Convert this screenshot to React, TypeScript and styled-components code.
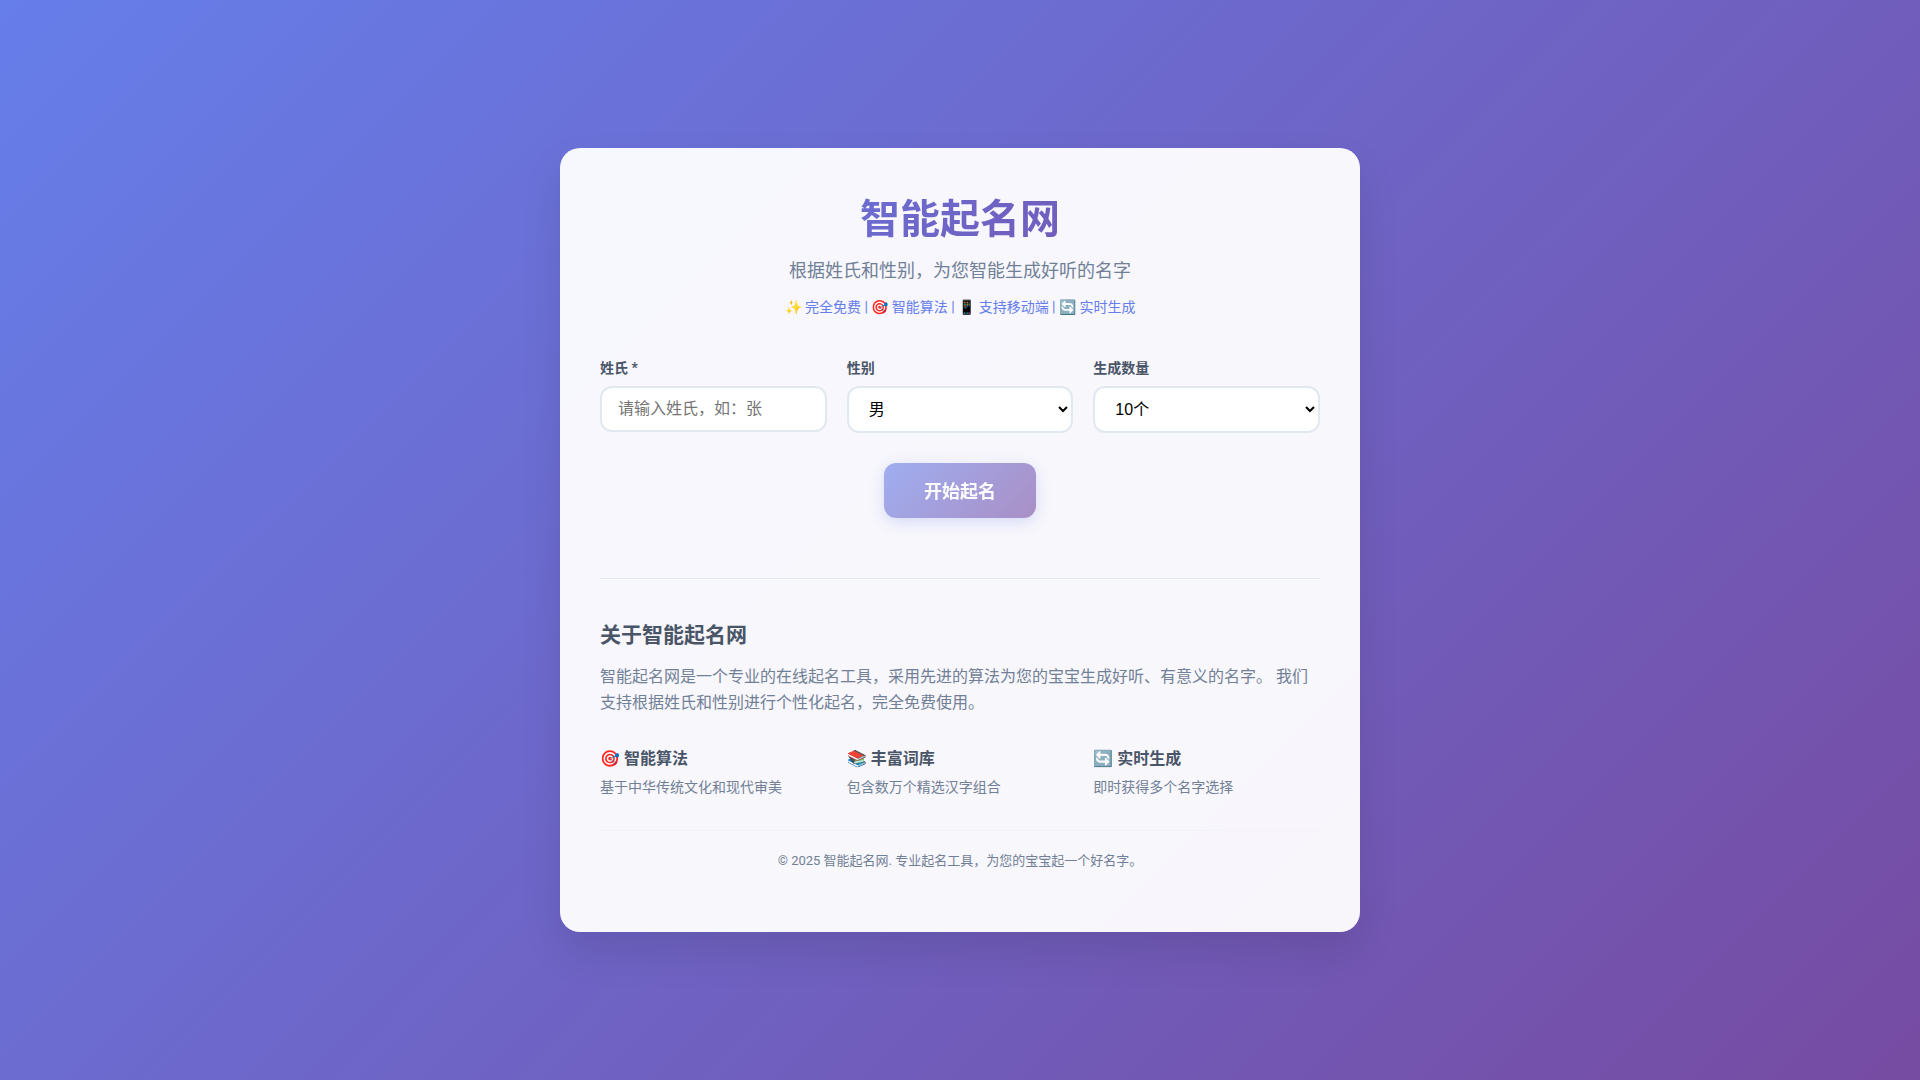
import React, { useState } from 'react';
import styled, { createGlobalStyle } from 'styled-components';

const GlobalStyle = createGlobalStyle`
  * { margin: 0; padding: 0; box-sizing: border-box; }
  body {
    font-family: Roboto, 'Noto Sans CJK SC', sans-serif;
    background: linear-gradient(135deg, #667eea 0%, #764ba2 100%);
    min-height: 100vh;
  }
`;

const Page = styled.div`
  min-height: 100vh;
  display: flex;
  align-items: center;
  justify-content: center;
  padding: 20px;
`;

const Card = styled.main`
  width: 100%;
  max-width: 800px;
  padding: 40px;
  border-radius: 20px;
  background: rgba(255, 255, 255, 0.95);
  box-shadow: 0 20px 40px rgba(0, 0, 0, 0.1);
`;

const Header = styled.header`
  text-align: center;
  margin-bottom: 40px;
`;

const Title = styled.h1`
  font-size: 40px;
  line-height: 64px;
  font-weight: 700;
  margin-bottom: 6px;
  background: linear-gradient(135deg, #667eea 0%, #764ba2 100%);
  background-clip: text;
  -webkit-background-clip: text;
  -webkit-text-fill-color: transparent;
`;

const Subtitle = styled.p`
  font-size: 18px;
  line-height: 26px;
  color: #718096;
`;

const Highlights = styled.p`
  margin-top: 12px;
  font-size: 14px;
  line-height: 23px;
  color: #667eea;
`;

const Form = styled.form`
  text-align: center;
`;

const Fields = styled.div`
  display: grid;
  grid-template-columns: repeat(3, minmax(0, 1fr));
  align-items: start;
  gap: 20px;
  margin-bottom: 30px;
  text-align: left;
`;

const Field = styled.div`
  display: flex;
  flex-direction: column;
`;

const Label = styled.label`
  font-size: 14px;
  line-height: 19px;
  font-weight: 600;
  color: #4a5568;
  margin-bottom: 8px;
`;

const TextInput = styled.input`
  height: 46px;
  padding: 12px 16px;
  border: 2px solid #e2e8f0;
  border-radius: 12px;
  background: white;
  font-family: 'Liberation Sans', 'Noto Sans CJK SC', sans-serif;
  font-size: 16px;
`;

const Select = styled.select`
  height: 47px;
  padding: 12px 16px;
  border: 2px solid #e2e8f0;
  border-radius: 12px;
  background: white;
  color: black;
  font-family: 'Liberation Sans', 'Noto Sans CJK SC', sans-serif;
  font-size: 16px;
`;

const Submit = styled.button`
  padding: 18px 40px 14px;
  border: none;
  border-radius: 12px;
  background: linear-gradient(135deg, #667eea 0%, #764ba2 100%);
  box-shadow: 0 4px 15px rgba(102, 126, 234, 0.4);
  color: white;
  font-family: 'Liberation Sans', 'Noto Sans CJK SC', sans-serif;
  font-size: 18px;
  line-height: 23px;
  font-weight: 600;
  vertical-align: top;

  &:disabled {
    opacity: 0.6;
  }
`;

const About = styled.section`
  margin-top: 60px;
  padding-top: 40px;
  border-top: 1px solid #e2e8f0;
`;

const AboutTitle = styled.h2`
  font-size: 21px;
  line-height: 33px;
  color: #4a5568;
  margin-bottom: 12px;
`;

const AboutText = styled.p`
  font-size: 16px;
  line-height: 26px;
  color: #718096;
  margin-bottom: 30px;
`;

const Features = styled.div`
  display: grid;
  grid-template-columns: repeat(3, minmax(0, 1fr));
  gap: 20px;
`;

const FeatureTitle = styled.h3`
  font-size: 16px;
  line-height: 26px;
  color: #4a5568;
  margin-bottom: 5px;
`;

const FeatureText = styled.p`
  font-size: 14px;
  line-height: 21px;
  color: #718096;
`;

const Footer = styled.footer`
  margin-top: 32px;
  padding: 20px 0 22px;
  border-top: 1px solid #f0f4f8;
  text-align: center;
  font-size: 13px;
  line-height: 19px;
  color: #718096;
`;

const features = [
  { title: '🎯 智能算法', text: '基于中华传统文化和现代审美' },
  { title: '📚 丰富词库', text: '包含数万个精选汉字组合' },
  { title: '🔄 实时生成', text: '即时获得多个名字选择' },
];

export default function App() {
  const [surname, setSurname] = useState('');
  return (
    <>
      <GlobalStyle />
      <Page lang="zh-CN">
        <Card>
          <Header>
            <Title>智能起名网</Title>
            <Subtitle>根据姓氏和性别，为您智能生成好听的名字</Subtitle>
            <Highlights>✨ 完全免费 | 🎯 智能算法 | 📱 支持移动端 | 🔄 实时生成</Highlights>
          </Header>
          <Form onSubmit={(e) => e.preventDefault()}>
            <Fields>
              <Field>
                <Label htmlFor="surname">姓氏 *</Label>
                <TextInput
                  id="surname"
                  type="text"
                  placeholder="请输入姓氏，如：张"
                  value={surname}
                  onChange={(e) => setSurname(e.target.value)}
                />
              </Field>
              <Field>
                <Label htmlFor="gender">性别</Label>
                <Select id="gender" defaultValue="男">
                  <option>男</option>
                  <option>女</option>
                </Select>
              </Field>
              <Field>
                <Label htmlFor="count">生成数量</Label>
                <Select id="count" defaultValue="10个">
                  <option>5个</option>
                  <option>10个</option>
                  <option>20个</option>
                </Select>
              </Field>
            </Fields>
            <Submit type="submit" disabled={!surname}>开始起名</Submit>
          </Form>
          <About>
            <AboutTitle>关于智能起名网</AboutTitle>
            <AboutText>
              智能起名网是一个专业的在线起名工具，采用先进的算法为您的宝宝生成好听、有意义的名字。 我们支持根据姓氏和性别进行个性化起名，完全免费使用。
            </AboutText>
            <Features>
              {features.map((f) => (
                <div key={f.title}>
                  <FeatureTitle>{f.title}</FeatureTitle>
                  <FeatureText>{f.text}</FeatureText>
                </div>
              ))}
            </Features>
          </About>
          <Footer>© 2025 智能起名网. 专业起名工具，为您的宝宝起一个好名字。</Footer>
        </Card>
      </Page>
    </>
  );
}
